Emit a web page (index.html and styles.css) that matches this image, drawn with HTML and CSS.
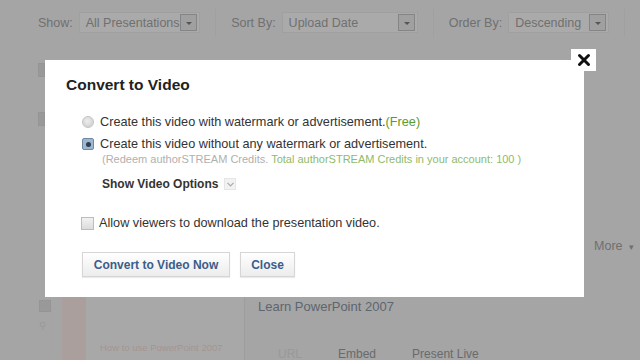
FILE: index.html
```html
<!DOCTYPE html>
<html>
<head>
<meta charset="utf-8">
<link rel="stylesheet" href="styles.css">
</head>
<body>
<div class="page">
  <div class="topbar">
    <span class="lbl">Show:</span>
    <span class="sel sel-show"><span class="val">All Presentations</span><span class="arr"></span></span>
    <span class="sep"></span>
    <span class="lbl">Sort By:</span>
    <span class="sel sel-sort"><span class="val">Upload Date</span><span class="arr"></span></span>
    <span class="sep"></span>
    <span class="lbl">Order By:</span>
    <span class="sel sel-order"><span class="val">Descending</span><span class="arr"></span></span>
    <span class="sep"></span>
  </div>
  <div class="content">
    <div class="leftcol">
      <span class="sq"></span>
      <span class="sq sq2"></span>
    </div>
    <div class="main">
      <div class="more">More <span class="caret">&#9662;</span></div>
    </div>
  </div>
  <div class="row">
    <div class="rowicons">
      <span class="sq"></span>
      <span class="mag">&#9906;</span>
    </div>
    <div class="thumb">
      <span class="strip"></span>
      <span class="thumbtxt">How to use PowerPoint 2007</span>
    </div>
    <div class="info">
      <div class="ptitle">Learn PowerPoint 2007</div>
      <div class="links"><span class="url">URL</span><span>Embed</span><span>Present Live</span></div>
    </div>
  </div>
</div>

<div class="modal">
  <h2 class="title">Convert to Video</h2>
  <div class="opts">
    <div class="opt"><span class="radio"></span><span>Create this video with watermark or advertisement.<span class="green">(Free)</span></span></div>
    <div class="opt opt2"><span class="radio on"><span class="dot"></span></span><span>Create this video without any watermark or advertisement.</span></div>
    <div class="note">(Redeem authorSTREAM Credits. <span class="green2">Total authorSTREAM Credits in your account: 100 )</span></div>
    <div class="showopts">Show Video Options <span class="ddbtn"><svg width="7" height="5" viewBox="0 0 7 5"><path d="M0.5 0.8 L3.5 3.8 L6.5 0.8" fill="none" stroke="#aaa" stroke-width="1.2"/></svg></span></div>
    <div class="chk"><span class="box"></span><span>Allow viewers to download the presentation video.</span></div>
    <div class="btns">
      <span class="btn btn-conv">Convert to Video Now</span>
      <span class="btn btn-close">Close</span>
    </div>
  </div>
  <span class="xbtn"><svg width="14" height="14" viewBox="0 0 14 14"><path d="M2.5 2.5 L11.5 11.5 M11.5 2.5 L2.5 11.5" stroke="#111" stroke-width="3" stroke-linecap="round"/></svg></span>
</div>
</body>
</html>
```
FILE: styles.css
```css
* { box-sizing: border-box; }
html, body { margin: 0; padding: 0; }
body {
  width: 640px; height: 360px; overflow: hidden;
  background: #a5a5a5;
  font-family: "Liberation Sans", Arial, sans-serif;
  position: relative;
}
.page { width: 640px; height: 360px; color: #6c6c6c; font-size: 12px; }

.topbar {
  display: flex; align-items: center;
  height: 45px; padding-left: 38px; white-space: nowrap;
}
.lbl { font-size: 12.5px; color: #707070; }
.sel {
  display: flex; align-items: center; justify-content: space-between;
  height: 21px; margin-left: 6px;
  background: #aaaaaa; border: 1px solid #a0a0a0;
  padding: 0 2px 0 6px;
}
.val { font-size: 12.5px; color: #707070; }
.arr {
  width: 17px; height: 17px; border: 1px solid #858585; background: #a0a0a0;
  position: relative;
}
.arr::after {
  content: ""; position: absolute; left: 5px; top: 7px;
  border-left: 3px solid transparent; border-right: 3px solid transparent; border-top: 3px solid #555;
}
.sel-show { width: 124px; }
.sel-sort { width: 139px; }
.sel-order { width: 103px; }
.sep { width: 1px; height: 28px; background: #a0a0a0; margin: 0 15px; }

.content { display: flex; height: 252px; }
.leftcol { width: 60px; padding: 18px 0 0 38px; display: flex; flex-direction: column; gap: 35px; }
.sq { display: block; width: 7px; height: 14px; background: #999; border: 1px solid #959595; }
.main { flex: 1; display: flex; justify-content: flex-end; padding: 194px 6px 0 0; }
.more { font-size: 12.5px; color: #6f6f6f; }
.caret { font-size: 9px; margin-left: 3px; }

.row { display: flex; height: 63px; }
.rowicons { width: 62px; padding: 3px 0 0 39px; display: flex; flex-direction: column; gap: 8px; }
.rowicons .sq { width: 12px; height: 12px; }
.mag { font-size: 10px; color: #999; }
.thumb { width: 183px; background: #a9a8a8; position: relative; display: flex; border-right: 1px solid #9d9d9d; }
.strip { width: 24px; background: #aa9f9d; }
.thumbtxt { position: absolute; left: 38px; top: 45px; font-size: 9.5px; color: #a39591; white-space: nowrap; }
.info { flex: 1; padding: 2px 0 0 13px; }
.ptitle { font-size: 13px; color: #5d6670; }
.links { display: flex; gap: 36px; margin-top: 33px; padding-left: 20px; font-size: 12px; color: #6a6a6a; }
.links .url { color: #999; }

.modal {
  position: absolute; left: 45px; top: 60px; width: 539px; height: 237px;
  background: #fff; color: #333;
}
.title { margin: 0; padding: 16px 0 0 21px; font-size: 15.5px; font-weight: bold; color: #222; height: 39px; }
.opts { padding: 15px 0 0 37px; font-size: 12.7px; }
.opt { display: flex; align-items: center; gap: 6px; height: 16px; }
.opt2 { margin-top: 6px; }
.green { color: #5d9a2e; }
.radio {
  width: 12px; height: 12px; border-radius: 50%; flex: none;
  background: radial-gradient(circle at 45% 40%, #eee, #c9c9c9);
  border: 1px solid #c4c4c4;
}
.radio.on {
  border-radius: 2px; background: #9fb6cc; border: 1px solid #6f8aa6;
  display: flex; align-items: center; justify-content: center;
}
.dot { width: 5px; height: 5px; border-radius: 50%; background: #2a3f56; }
.note { padding-left: 20px; margin-top: 1px; font-size: 11px; color: #b0b0b0; }
.green2 { color: #8ebb6c; }
.showopts { display: flex; align-items: center; margin-top: 12px; padding-left: 20px; font-weight: bold; font-size: 12px; color: #333; }
.ddbtn {
  margin-left: 6px; width: 12px; height: 12px; border: 1px solid #e6e6e6; background: #f2f2f2;
  display: flex; align-items: center; justify-content: center;
}
.chk { display: flex; align-items: center; gap: 5px; margin-top: 25px; margin-left: -1px; }
.box { width: 13px; height: 13px; border: 1px solid #bcbcbc; background: linear-gradient(#f2f2f2, #dcdcdc); }
.btns { display: flex; gap: 10px; margin-top: 22px; }
.btn {
  height: 25px; display: flex; align-items: center; justify-content: center;
  font-weight: bold; color: #3c5d8a; font-size: 12px;
  background: linear-gradient(#ffffff, #ececec); border: 1px solid #d6d6d6;
  box-shadow: 0 1px 1px rgba(0,0,0,0.08);
}
.btn-conv { width: 148px; }
.btn-close { width: 55px; }
.xbtn {
  position: absolute; right: -12px; top: -11px; width: 25px; height: 22px;
  background: #fff; display: flex; align-items: center; justify-content: center;
}
```
